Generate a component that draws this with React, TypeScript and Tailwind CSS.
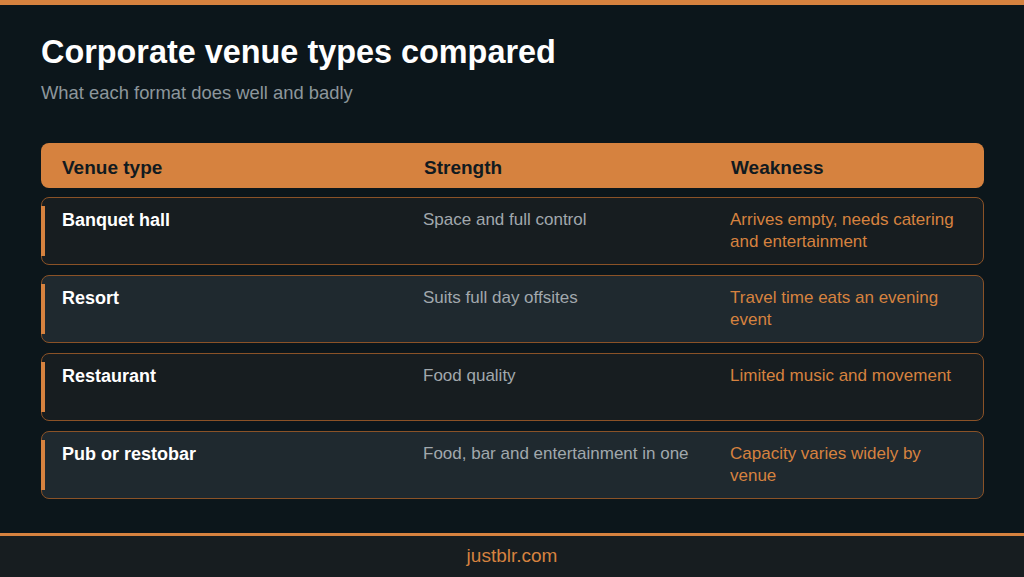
const rows = [
  { name: "Banquet hall", strength: "Space and full control", weakness: "Arrives empty, needs catering and entertainment", alt: false },
  { name: "Resort", strength: "Suits full day offsites", weakness: "Travel time eats an evening event", alt: true },
  { name: "Restaurant", strength: "Food quality", weakness: "Limited music and movement", alt: false },
  { name: "Pub or restobar", strength: "Food, bar and entertainment in one", weakness: "Capacity varies widely by venue", alt: true },
];

export default function App() {
  return (
    <div
      className="w-[1024px] h-[577px] bg-[#0c161b] flex flex-col overflow-hidden"
      style={{ fontFamily: '"Liberation Sans", Arial, sans-serif' }}
    >
      <div className="h-[5px] bg-[#d6823f]" />

      <div className="flex-1 pl-[41px] pr-[40px] pt-[29px]">
        <h1 className="text-[32.4px] leading-[36px] font-bold text-white">Corporate venue types compared</h1>
        <p className="mt-[12px] text-[18.4px] leading-[22px] text-[#8d969c]">What each format does well and badly</p>

        {/* header */}
        <div className="mt-[39px] h-[45px] rounded-[8px] bg-[#d6823f] grid grid-cols-[362px_307px_1fr] items-center pt-[5px] pl-[21px] pr-[21px] text-[19px] font-bold text-[#111a1f]">
          <span>Venue type</span>
          <span>Strength</span>
          <span>Weakness</span>
        </div>

        <div className="mt-[9px] flex flex-col gap-[10px]">
          {rows.map((r) => (
            <div
              key={r.name}
              className={`relative h-[68px] rounded-[8px] border border-[#8a5227] grid grid-cols-[361px_307px_1fr] pl-[20px] pr-[20px] pt-[11px] ${
                r.alt ? "bg-[#1f292f]" : "bg-[#171d20]"
              }`}
            >
              <div className="absolute left-[-1px] top-[8px] bottom-[8px] w-[4px] bg-[#d6823f]" />
              <span className="text-[18px] leading-[22px] font-bold text-white">{r.name}</span>
              <span className="text-[17px] leading-[22px] text-[#a1a8ad]">{r.strength}</span>
              <span className="text-[17px] leading-[22px] text-[#d6823f]">{r.weakness}</span>
            </div>
          ))}
        </div>
      </div>

      <div className="h-[3px] bg-[#d6823f]" />
      <div className="h-[41px] bg-[#171d20] flex items-center justify-center text-[19px] text-[#d6823f]">
        justblr.com
      </div>
    </div>
  );
}
